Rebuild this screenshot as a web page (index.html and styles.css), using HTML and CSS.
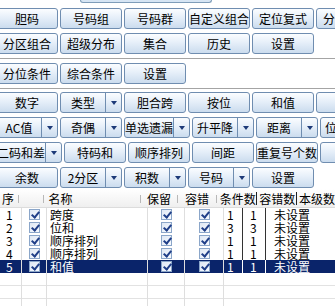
FILE: index.html
```html
<!DOCTYPE html>
<html lang="zh-CN">
<head>
  <meta charset="UTF-8">
  <title>条件设置</title>
  <link rel="stylesheet" href="styles.css">
</head>
<body>
  <div class="tabstrip"><div class="tab"></div></div>

  <div class="btn-row">
    <div class="btn">胆码</div>
    <div class="btn">号码组</div>
    <div class="btn">号码群</div>
    <div class="btn">自定义组合</div>
    <div class="btn">定位复式</div>
    <div class="btn">分位复式</div>
  </div>
  <div class="btn-row">
    <div class="btn">分区组合</div>
    <div class="btn">超级分布</div>
    <div class="btn">集合</div>
    <div class="btn">历史</div>
    <div class="btn">设置</div>
  </div>

  <div class="sep"></div>

  <div class="btn-row">
    <div class="btn">分位条件</div>
    <div class="btn">综合条件</div>
    <div class="btn">设置</div>
  </div>

  <div class="sep sep-low"></div>

  <div class="btn-row">
    <div class="btn">数字</div>
    <div class="btn split"><span class="label">类型</span><span class="drop"></span></div>
    <div class="btn">胆合跨</div>
    <div class="btn">按位</div>
    <div class="btn">和值</div>
    <div class="btn">质合</div>
  </div>
  <div class="btn-row">
    <div class="btn split"><span class="label">AC值</span><span class="drop"></span></div>
    <div class="btn split"><span class="label">奇偶</span><span class="drop"></span></div>
    <div class="btn split"><span class="label">单选遗漏</span><span class="drop"></span></div>
    <div class="btn split"><span class="label">升平降</span><span class="drop"></span></div>
    <div class="btn split"><span class="label">距离</span><span class="drop"></span></div>
    <div class="btn split"><span class="label">位和差</span><span class="drop"></span></div>
  </div>
  <div class="btn-row">
    <div class="btn split"><span class="label">二码和差</span><span class="drop"></span></div>
    <div class="btn">特码和</div>
    <div class="btn">顺序排列</div>
    <div class="btn">间距</div>
    <div class="btn">重复号个数</div>
    <div class="btn">连号</div>
  </div>
  <div class="btn-row">
    <div class="btn">余数</div>
    <div class="btn split"><span class="label">2分区</span><span class="drop"></span></div>
    <div class="btn split"><span class="label">积数</span><span class="drop"></span></div>
    <div class="btn split"><span class="label">号码</span><span class="drop"></span></div>
    <div class="btn">设置</div>
  </div>

  <div class="grid">
    <div class="grid-head">
      <span class="h h-no">序</span>
      <span class="h h-chk"></span>
      <span class="h h-name">名称</span>
      <span class="h h-keep">保留</span>
      <span class="h h-tol">容错</span>
      <span class="h h-cnt dark">条件数</span>
      <span class="h h-tcnt dark">容错数</span>
      <span class="h h-level">本级数</span>
    </div>

    <div class="row">
      <span class="c c-no">1</span>
      <span class="c c-chk"><i class="cb"></i></span>
      <span class="c c-name">跨度</span>
      <span class="c c-keep"><i class="cb"></i></span>
      <span class="c c-tol"><i class="cb"></i></span>
      <span class="c c-n1">1</span>
      <span class="c c-n2">1</span>
      <span class="c c-st">未设置</span>
    </div>
    <div class="row">
      <span class="c c-no">2</span>
      <span class="c c-chk"><i class="cb"></i></span>
      <span class="c c-name">位和</span>
      <span class="c c-keep"><i class="cb"></i></span>
      <span class="c c-tol"><i class="cb"></i></span>
      <span class="c c-n1">3</span>
      <span class="c c-n2">3</span>
      <span class="c c-st">未设置</span>
    </div>
    <div class="row">
      <span class="c c-no">3</span>
      <span class="c c-chk"><i class="cb"></i></span>
      <span class="c c-name">顺序排列</span>
      <span class="c c-keep"><i class="cb"></i></span>
      <span class="c c-tol"><i class="cb"></i></span>
      <span class="c c-n1">1</span>
      <span class="c c-n2">1</span>
      <span class="c c-st">未设置</span>
    </div>
    <div class="row">
      <span class="c c-no">4</span>
      <span class="c c-chk"><i class="cb"></i></span>
      <span class="c c-name">顺序排列</span>
      <span class="c c-keep"><i class="cb"></i></span>
      <span class="c c-tol"><i class="cb"></i></span>
      <span class="c c-n1">1</span>
      <span class="c c-n2">1</span>
      <span class="c c-st">未设置</span>
    </div>
    <div class="row selected">
      <span class="c c-no">5</span>
      <span class="c c-chk"><i class="cb"></i></span>
      <span class="c c-name">和值</span>
      <span class="c c-keep"><i class="cb"></i></span>
      <span class="c c-tol"><i class="cb"></i></span>
      <span class="c c-n1">1</span>
      <span class="c c-n2">1</span>
      <span class="c c-st">未设置</span>
    </div>

    <div class="row empty">
      <span class="c c-no"></span><span class="c c-chk"></span><span class="c c-name"></span>
      <span class="c c-keep"></span><span class="c c-tol"></span><span class="c c-rest"></span>
    </div>
    <div class="row empty">
      <span class="c c-no"></span><span class="c c-chk"></span><span class="c c-name"></span>
      <span class="c c-keep"></span><span class="c c-tol"></span><span class="c c-rest"></span>
    </div>
    <div class="row empty">
      <span class="c c-no"></span><span class="c c-chk"></span><span class="c c-name"></span>
      <span class="c c-keep"></span><span class="c c-tol"></span><span class="c c-rest"></span>
    </div>
  </div>
</body>
</html>
```

FILE: styles.css
```css
* {
  margin: 0;
  padding: 0;
  box-sizing: border-box;
}

body {
  width: 335px;
  height: 306px;
  overflow: hidden;
  background: #fff;
  color: #000;
  font-family: "Noto Sans CJK SC", "Noto Sans", sans-serif;
  font-size: 12px;
}

/* bout d'onglet en haut */
.tabstrip {
  height: 8px;
}

.tab {
  margin-left: 80px;
  width: 132px;
  height: 3px;
  border: 1px solid #7f9db9;
  border-top: none;
  border-radius: 0 0 3px 3px;
  background: #d6e5f4;
}

/* rangées de boutons */
.btn-row {
  display: flex;
  gap: 2px;
  margin-left: -4px;
  margin-bottom: 4px;
  height: 21px;
  white-space: nowrap;
}

.btn {
  flex: 0 0 62px;
  height: 21px;
  display: flex;
  align-items: center;
  justify-content: center;
  border: 1px solid #6f8db0;
  border-radius: 3px;
  background: linear-gradient(to bottom, #fbfdff 0%, #e6eff9 45%, #cbdcee 100%);
  line-height: 1;
}

.btn.split {
  justify-content: flex-start;
}

.split .label {
  flex: 1;
  display: flex;
  justify-content: center;
}

.split .drop {
  flex: 0 0 16px;
  align-self: stretch;
  display: flex;
  align-items: center;
  justify-content: center;
  border-left: 1px solid #6f8db0;
}

.split .drop::before {
  content: "";
  border-left: 3.5px solid transparent;
  border-right: 3.5px solid transparent;
  border-top: 4px solid #1d3a78;
}

.sep {
  height: 1px;
  background: #a4a4a4;
  margin-bottom: 4px;
}

.sep-low {
  margin-top: 1px;
  margin-bottom: 3px;
}

/* grille */
.grid {
  margin-top: -3px;
  line-height: 13px;
}

.grid-head {
  display: flex;
  height: 19px;
  align-items: center;
  background: linear-gradient(to bottom, #ffffff, #efefef);
  border-bottom: 1px solid #dcdcdc;
  white-space: nowrap;
}

.h {
  position: relative;
  height: 13px;
  padding-left: 3px;
}

.h::after {
  content: "";
  position: absolute;
  right: 0;
  top: 3px;
  height: 8px;
  border-right: 1px solid #b8b8b8;
}

.h.dark::after {
  top: 0;
  height: 13px;
  border-right-color: #222;
}

.h-no { width: 20px; padding-left: 2px; }
.h-chk { width: 25px; }
.h-name { width: 101px; padding-left: 5px; }
.h-keep { width: 38px; padding-left: 6px; }
.h-tol { width: 40px; padding-left: 7px; }
.h-cnt { width: 42px; }
.h-tcnt { width: 41px; padding-left: 2px; }
.h-level { flex: 1; padding-left: 2px; }
.h-level::after { display: none; }

.row {
  display: flex;
  height: 13px;
  white-space: nowrap;
}

.c {
  height: 13px;
  display: flex;
  align-items: center;
  border-right: 1px solid #dedede;
}

.c-no { width: 22px; padding-left: 6px; }
.c-chk { width: 25px; justify-content: center; }
.c-name { width: 101px; padding-left: 3px; }
.c-keep { width: 37px; justify-content: center; }
.c-tol { width: 39px; justify-content: center; }
.c-n1 { width: 19px; padding-left: 3px; border-right-color: #333; }
.c-n2 { width: 23px; padding-left: 7px; border-right-color: #333; }
.c-st { flex: 1; padding-left: 8px; border-right: none; }
.c-rest { flex: 1; border-right: none; }

.row.selected {
  background: #0a246a;
  color: #fff;
}

.row.selected .c-n1,
.row.selected .c-n2 {
  border-right-color: #fff;
}

.row.empty {
  border-bottom: 1px solid #e2e2e2;
}

/* case à cocher */
.cb {
  position: relative;
  display: block;
  width: 11px;
  height: 11px;
  border: 1px solid #8ba6c9;
  background: linear-gradient(to bottom right, #dfe8f4, #f7faff);
}

.cb::after {
  content: "";
  position: absolute;
  left: 3px;
  top: 0;
  width: 3px;
  height: 6px;
  border: solid #203f88;
  border-width: 0 2px 2px 0;
  transform: rotate(40deg);
}
```
